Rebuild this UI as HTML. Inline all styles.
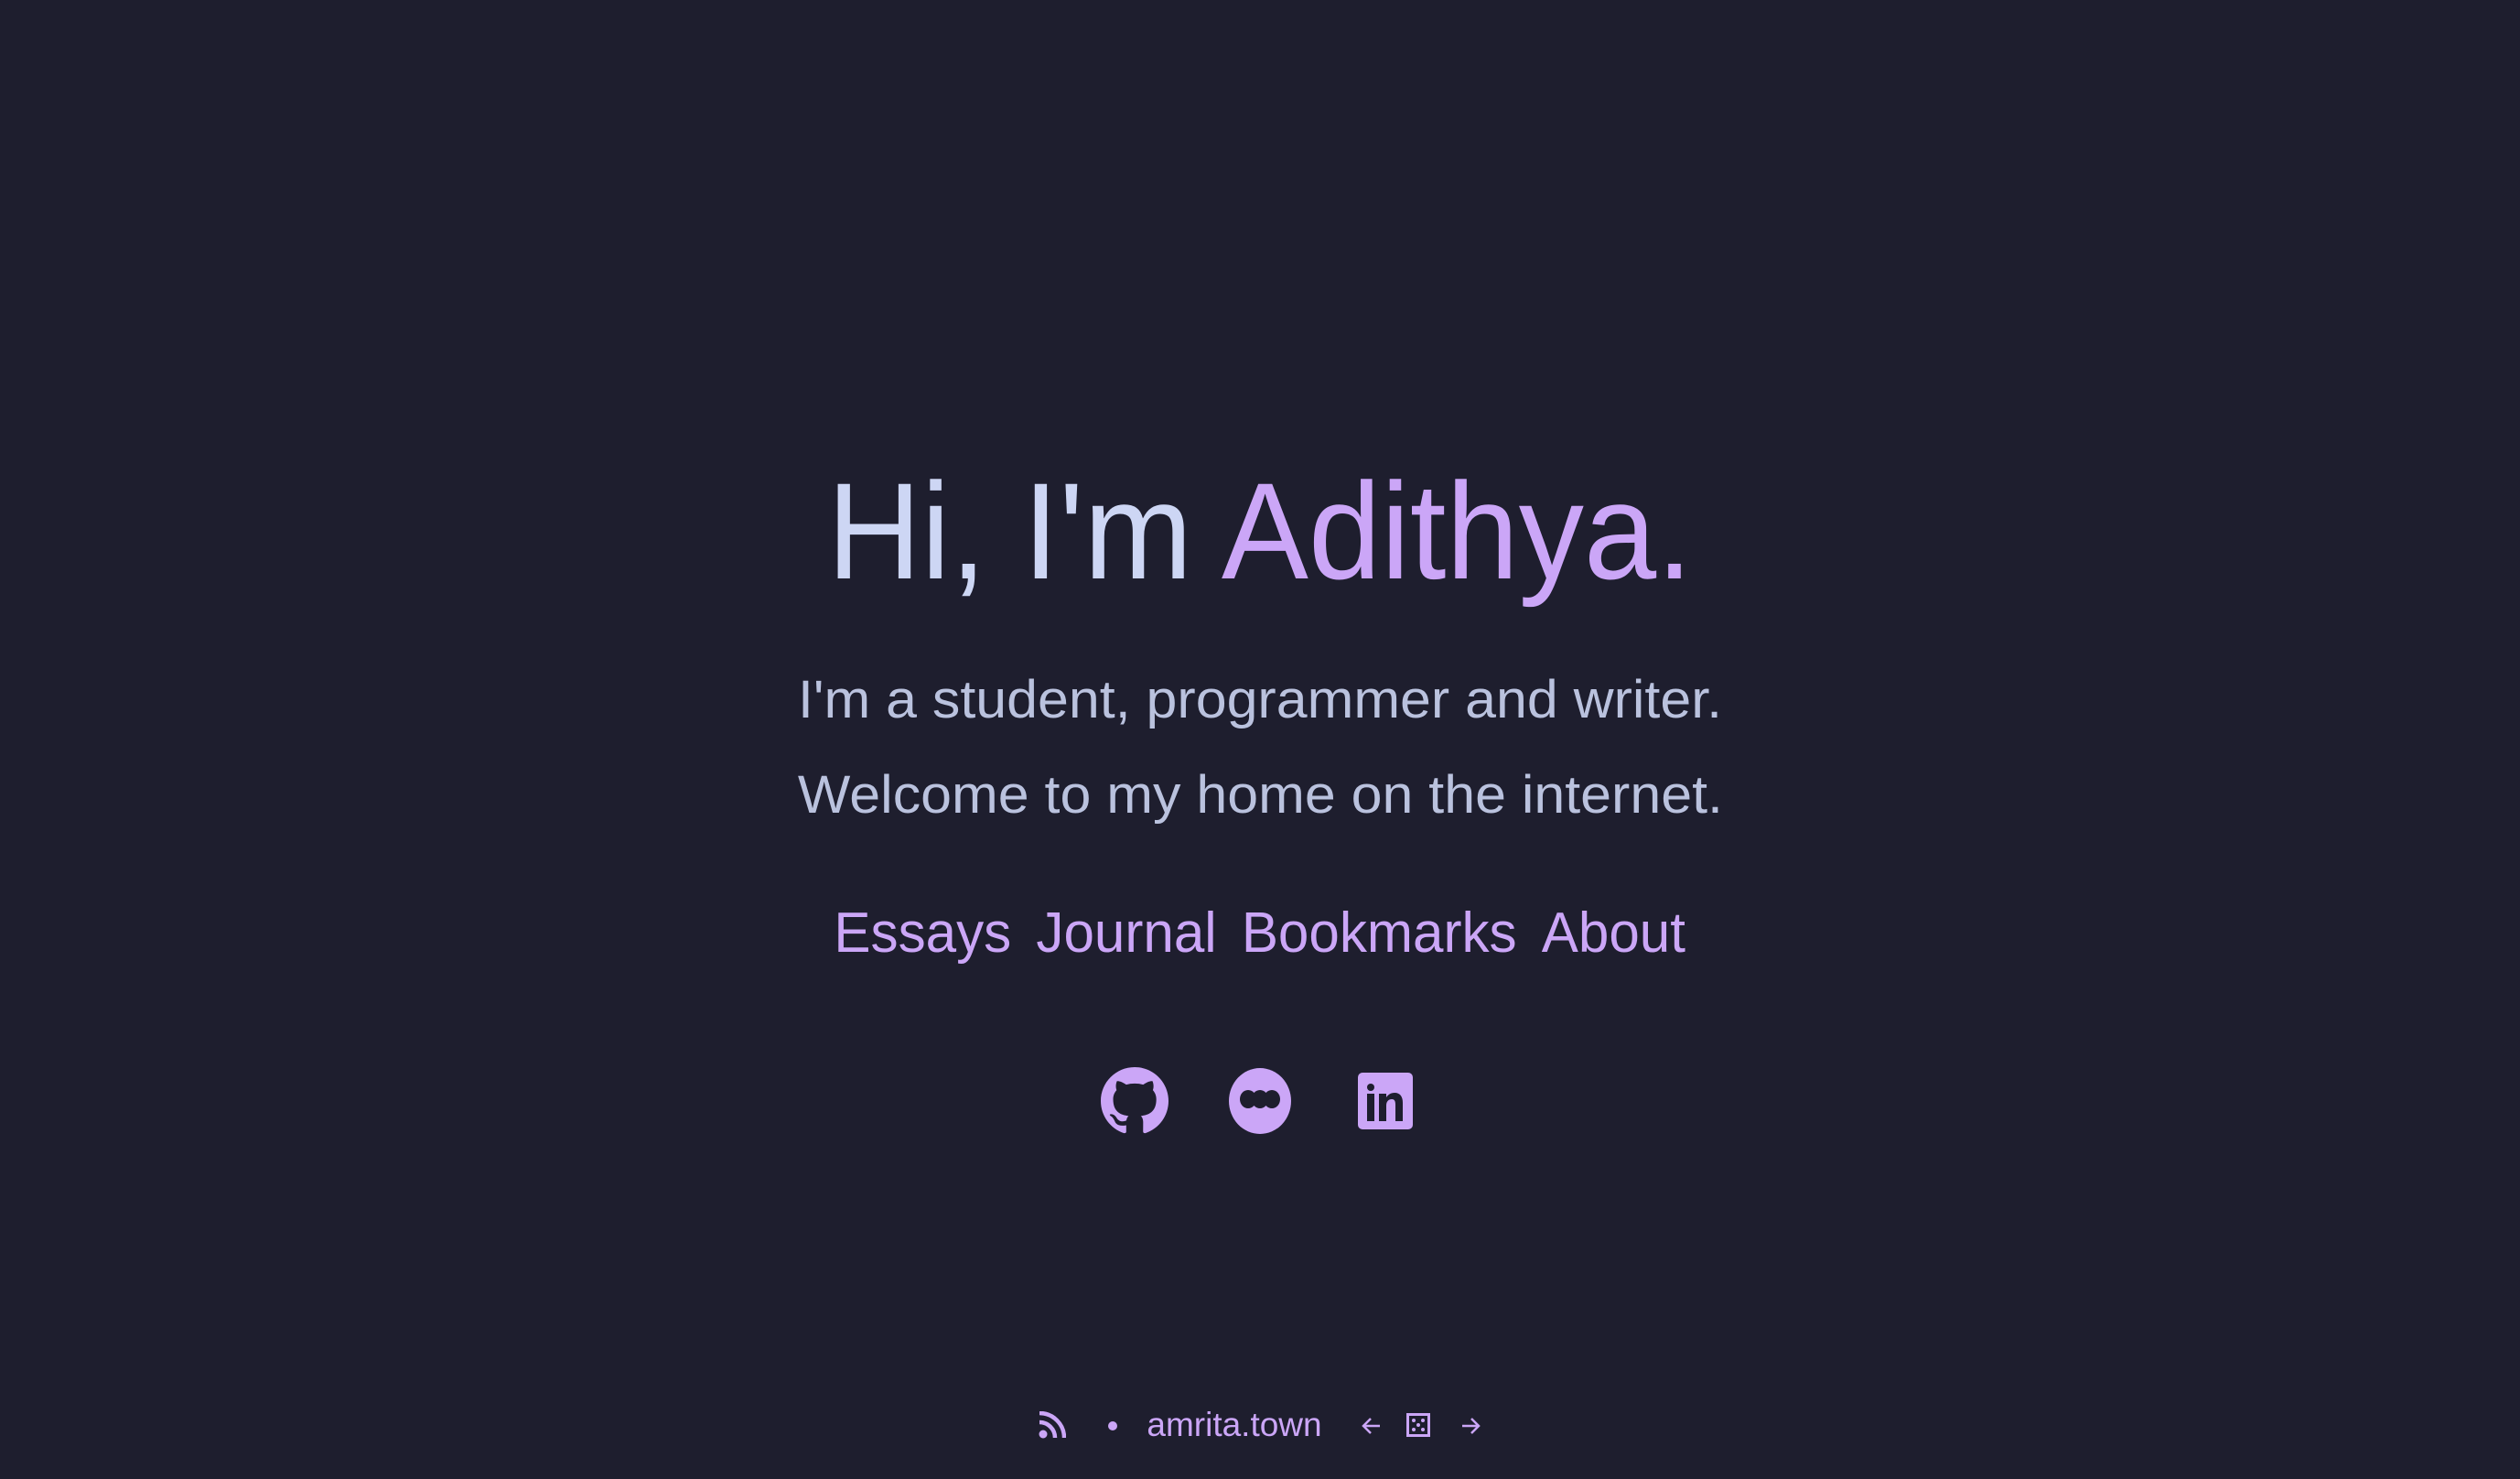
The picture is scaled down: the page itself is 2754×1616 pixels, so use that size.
<!DOCTYPE html>
<html><head><meta charset="utf-8"><style>
html,body{margin:0;padding:0;background:#1e1e2e;width:2754px;height:1616px;overflow:hidden;font-family:"Liberation Sans","DejaVu Sans",sans-serif}
.c{position:absolute;left:0;width:2754px;text-align:center;white-space:nowrap}
.c span.s{display:inline-block;transform-origin:center}
.h{top:490px;font-size:150px;line-height:180px;color:#cdd6f4}
.h span.s{transform:scaleX(.95)}
.m{color:#cba6f7}
.p{font-size:58px;color:#bac2de;line-height:70px}
.p span.s{transform:scaleX(1.05)}
.nav{top:980px;font-size:62px;line-height:80px;color:#cba6f7}
.nav span.s{transform:scaleX(.97)}
.nav span.s a{margin:0 14px;color:#cba6f7;text-decoration:none}
.ic{position:absolute;top:1166px}
.ft{top:1532px;font-size:37px;line-height:50px;color:#cba6f7}
</style></head><body>
<div class="c h"><span class="s">Hi, I'm <span class="m">Adithya.</span></span></div>
<div class="c p" style="top:730px"><span class="s">I'm a student, programmer and writer.</span></div>
<div class="c p" style="top:834px"><span class="s">Welcome to my home on the internet.</span></div>
<div class="c nav"><span class="s"><a>Essays</a><a>Journal</a><a>Bookmarks</a><a>About</a></span></div>

<svg class="ic" style="left:1203px" width="74" height="74" viewBox="0 0 16 16"><path fill="#cba6f7" d="M8 0C3.58 0 0 3.58 0 8c0 3.540 2.290 6.530 5.470 7.590.4.07.55-.17.55-.38 0-.19-.01-.82-.01-1.490-2.010.37-2.530-.49-2.690-.94-.09-.23-.48-.94-.82-1.130-.28-.15-.68-.52-.01-.53.63-.01 1.080.58 1.230.82.72 1.210 1.870.87 2.330.66.07-.52.28-.87.51-1.070-1.780-.2-3.640-.89-3.640-3.950 0-.87.31-1.590.82-2.150-.08-.2-.36-1.020.08-2.120 0 0 .67-.21 2.2.82.64-.18 1.320-.27 2-.27.68 0 1.360.09 2 .27 1.530-1.040 2.2-.82 2.2-.82.44 1.1.16 1.920.08 2.120.51.56.82 1.270.82 2.150 0 3.070-1.870 3.750-3.650 3.950.29.25.54.73.54 1.480 0 1.070-.01 1.930-.01 2.2 0 .21.15.46.55.38A8.013 8.013 0 0016 8c0-4.420-3.580-8-8-8z"/></svg>
<svg class="ic" style="left:1340px" width="74" height="74" viewBox="0 0 74 74"><ellipse cx="37" cy="37" rx="34" ry="36" fill="#cba6f7"/><ellipse cx="24" cy="35" rx="9" ry="10" fill="#1e1e2e"/><ellipse cx="37" cy="35" rx="9" ry="10" fill="#1e1e2e"/><ellipse cx="50" cy="35" rx="9" ry="10" fill="#1e1e2e"/></svg>
<svg class="ic" style="left:1478px" width="74" height="74" viewBox="0 0 74 74"><rect x="6" y="6" width="60" height="62" rx="5" fill="#cba6f7"/><circle cx="20" cy="22" r="4" fill="#1e1e2e"/><rect x="16" y="29" width="8" height="30" fill="#1e1e2e"/><path d="M29 29h8v4c2-3 5-5 9-5 6 0 9 4 9 11v20h-8V41c0-4-1-6-4-6s-6 2-6 7v17h-8z" fill="#1e1e2e"/></svg>

<div class="c ft"><span class="s">
<svg width="30" height="30" viewBox="0 0 30 30" style="vertical-align:-3px"><circle cx="5" cy="25" r="4.5" fill="#cba6f7"/><path d="M1 12a17 17 0 0 1 17 17" stroke="#cba6f7" stroke-width="4.5" fill="none"/><path d="M1 2a27 27 0 0 1 27 27" stroke="#cba6f7" stroke-width="4.5" fill="none"/></svg>
<span style="display:inline-block;width:10px;height:10px;border-radius:50%;background:#cba6f7;margin:0 32px 0 36px;vertical-align:6px"></span><span>amrita.town</span>
<svg width="24" height="24" viewBox="0 0 24 24" style="margin:0 26px 0 32px;vertical-align:-1px"><path d="M21 12H3M11 4l-8 8 8 8" stroke="#cba6f7" stroke-width="2.5" fill="none"/></svg><svg width="26" height="26" viewBox="0 0 26 26" style="vertical-align:-1px"><rect x="1.5" y="1.5" width="23" height="23" fill="none" stroke="#cba6f7" stroke-width="3"/><circle cx="8" cy="8" r="2" fill="#cba6f7"/><circle cx="18" cy="8" r="2" fill="#cba6f7"/><circle cx="13" cy="13" r="2" fill="#cba6f7"/><circle cx="8" cy="18" r="2" fill="#cba6f7"/><circle cx="18" cy="18" r="2" fill="#cba6f7"/></svg><svg width="24" height="24" viewBox="0 0 24 24" style="margin-left:32px;vertical-align:-1px"><path d="M3 12h18M13 4l8 8-8 8" stroke="#cba6f7" stroke-width="2.5" fill="none"/></svg>
</span></div>
</body></html>
